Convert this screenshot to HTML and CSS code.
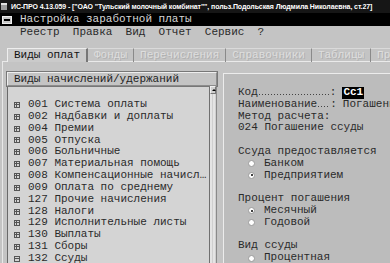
FILE: index.html
```html
<!DOCTYPE html>
<html lang="ru">

<head>
  <meta charset="UTF-8" />
  <title>Настройка заработной платы</title>
  <link rel="stylesheet" href="styles.css">
</head>

<body>
  <div class="app-title"><span class="app-icon"></span>ИС-ПРО 4.13.059 - ["ОАО "Тульский молочный комбинат"", польз.Подольская Людмила Николаевна, ст.27]</div>
  <div class="doc-title"><span class="sys-btn"></span>Настройка заработной платы</div>

  <div class="menu">
    <span>Реестр</span>
    <span>Правка</span>
    <span>Вид</span>
    <span>Отчет</span>
    <span>Сервис</span>
    <span>?</span>
  </div>

  <div class="workspace">
    <div class="tabs">
      <div class="tab active">Виды оплат</div>
      <div class="tab disabled">Фонды</div>
      <div class="tab disabled">Перечисления</div>
      <div class="tab disabled">Справочники</div>
      <div class="tab disabled">Таблицы</div>
      <div class="tab disabled">Пр</div>
    </div>

    <div class="tab-page">
      <div class="tree-panel">
        <div class="tree-head">Виды начислений/удержаний</div>
        <div class="tree-body">
          <ul class="tree">
            <li><span class="node"></span>001 Система оплаты</li>
            <li><span class="node"></span>002 Надбавки и доплаты</li>
            <li><span class="node"></span>004 Премии</li>
            <li><span class="node"></span>005 Отпуска</li>
            <li><span class="node"></span>006 Больничные</li>
            <li><span class="node"></span>007 Материальная помощь</li>
            <li><span class="node"></span>008 Компенсационные начисл…</li>
            <li><span class="node"></span>009 Оплата по среднему</li>
            <li><span class="node"></span>127 Прочие начисления</li>
            <li><span class="node"></span>128 Налоги</li>
            <li><span class="node"></span>129 Исполнительные листы</li>
            <li><span class="node"></span>130 Выплаты</li>
            <li><span class="node"></span>131 Сборы</li>
            <li><span class="node open"></span>132 Ссуды</li>
          </ul>
          <div class="scrollbar">
            <div class="arrow-up"></div>
          </div>
        </div>
      </div>

      <div class="props">
        <div class="field">
          <span class="label">Код</span><span class="leader"></span><span class="colon">:</span>
          <span class="value selected">Cс1</span>
        </div>
        <div class="field">
          <span class="label">Наименование</span><span class="leader short"></span><span class="colon">:</span>
          <span class="value">Погашени</span>
        </div>
        <div class="line">Метод расчета:</div>
        <div class="line">024 Погашение ссуды</div>

        <div class="group">
          <div class="line">Ссуда предоставляется</div>
          <div class="radio"><span class="dot"></span>Банком</div>
          <div class="radio"><span class="dot on"></span>Предприятием</div>
        </div>

        <div class="group">
          <div class="line">Процент погашения</div>
          <div class="radio"><span class="dot on"></span>Месячный</div>
          <div class="radio"><span class="dot"></span>Годовой</div>
        </div>

        <div class="group">
          <div class="line">Вид ссуды</div>
          <div class="radio"><span class="dot"></span>Процентная</div>
        </div>
      </div>
    </div>
  </div>
</body>

</html>
```

FILE: styles.css
```css
* {
  margin: 0;
  padding: 0;
  box-sizing: border-box;
}

body {
  width: 390px;
  height: 263px;
  overflow: hidden;
  background: #c4c4c4;
  font-family: 'Liberation Mono', monospace;
  font-size: 11px;
  color: #1e1e1e;
}

/* заголовки окон */
.app-title {
  height: 13px;
  line-height: 13px;
  background: #161616;
  color: #fff;
  font-family: 'Liberation Sans', sans-serif;
  font-weight: bold;
  font-size: 7px;
  letter-spacing: -0.1px;
  white-space: nowrap;
  overflow: hidden;
  display: flex;
  align-items: center;
  padding-left: 1px;
}

.app-icon {
  width: 6px;
  height: 7px;
  background: #9a9a9a;
  border-top: 2px solid #e0e0e0;
  margin-right: 4px;
  flex: none;
}

.doc-title {
  height: 13px;
  line-height: 13px;
  background: #000;
  color: #d6d6d6;
  display: flex;
  align-items: center;
  padding-left: 2px;
  white-space: nowrap;
}

.sys-btn {
  width: 10px;
  height: 8px;
  background: #c8c8c8;
  border: 1px solid #eee;
  margin-right: 8px;
  position: relative;
}

.sys-btn::after {
  content: "";
  position: absolute;
  left: 1px;
  right: 1px;
  top: 2px;
  height: 2px;
  background: #000;
}

.menu {
  height: 13px;
  line-height: 13px;
  padding-left: 20px;
  display: flex;
  gap: 13.2px;
  color: #2a2a2a;
  white-space: nowrap;
}

/* рабочая область */
.workspace {
  padding: 9px 0 0 2px;
}

.tabs {
  display: flex;
  height: 14px;
  padding-left: 5px;
  white-space: nowrap;
}

.tab {
  line-height: 13px;
  padding: 0 6px;
  border-right: 1px solid #8a8a8a;
  border-top: 1px solid #dadada;
  flex: none;
}

.tab.active {
  background: #cacaca;
  border-left: 1px solid #eee;
  border-top: 1px solid #eee;
  border-right: 2px solid #777;
  color: #111;
}

.tab.disabled {
  color: #dedede;
  text-shadow: 1px 1px 0 #b0b0b0;
}

.tab-page {
  border-top: 1px solid #eaeaea;
  border-left: 1px solid #e8e8e8;
  margin-top: -1px;
  display: flex;
  padding: 10px 0 0 4px;
  height: 220px;
}

.tree-panel {
  width: 210px;
  flex: none;
}

.tree-head {
  height: 14px;
  line-height: 12px;
  padding-left: 6px;
  border: 1px solid #8c8c8c;
  border-top-color: #eee;
  border-left-color: #eee;
  background: #c4c4c4;
  outline: 1px solid #777;
  white-space: nowrap;
}

.tree-body {
  display: flex;
  height: 200px;
  border-left: 1px solid #6a6a6a;
  background: #d4d4d4;
}

.tree {
  list-style: none;
  flex: 1;
  padding: 13px 0 0 6px;
  line-height: 11.85px;
  white-space: nowrap;
  overflow: hidden;
  color: #2a2a2a;
}

.tree li {
  display: flex;
  align-items: center;
}

.node {
  width: 6px;
  height: 6px;
  border: 1px solid #555;
  margin-right: 8px;
  position: relative;
  flex: none;
}

.node::before,
.node::after {
  content: "";
  position: absolute;
  background: #555;
}

.node::before {
  left: 0;
  right: 0;
  top: 1px;
  height: 1px;
}

.node::after {
  top: 0;
  bottom: 0;
  left: 1px;
  width: 1px;
}

.node.open::after {
  display: none;
}

.scrollbar {
  width: 8px;
  flex: none;
  border-left: 1px solid #707070;
  border-right: 1px solid #8a8a8a;
  background: repeating-linear-gradient(90deg, #e4e4e4 0 2px, #cfcfcf 2px 3px);
}

.arrow-up {
  height: 8px;
  background: #d0d0d0;
  border: 1px solid #f0f0f0;
  border-right-color: #777;
  border-bottom-color: #777;
  position: relative;
}

.arrow-up::after {
  content: "";
  position: absolute;
  left: 1px;
  top: 2px;
  border-left: 2px solid transparent;
  border-right: 2px solid transparent;
  border-bottom: 2px solid #000;
}

/* свойства вида оплаты */
.props {
  flex: 1;
  margin-left: 6px;
  margin-top: 1px;
  background: #bcbcbc;
  border-top: 1px solid #ececec;
  border-left: 1px solid #ececec;
  padding: 13px 0 0 14px;
  line-height: 11.8px;
  white-space: nowrap;
  overflow: hidden;
  color: #2a2a2a;
}

.field {
  display: flex;
  align-items: baseline;
}

.label {
  flex: none;
}

.leader {
  width: 72px;
  flex: none;
  height: 1px;
  background: radial-gradient(circle, #444 0.6px, transparent 0.8px) 0 0 / 3px 1px repeat-x;
}

.leader.short {
  width: 13px;
}

.colon {
  width: 6.6px;
  flex: none;
}

.value {
  margin-left: 6px;
}

.value.selected {
  background: #000;
  color: #fff;
  font-weight: bold;
  padding: 0 1px;
}

.group {
  margin-top: 11.8px;
}

.radio {
  display: flex;
  align-items: center;
  padding-left: 10px;
}

.dot {
  width: 7px;
  height: 7px;
  border-radius: 50%;
  background: #fff;
  border: 1px solid #9a9a9a;
  margin-right: 9px;
  position: relative;
}

.dot.on::after {
  content: "";
  position: absolute;
  left: 1.5px;
  top: 1.5px;
  width: 2px;
  height: 2px;
  border-radius: 50%;
  background: #000;
}
```
